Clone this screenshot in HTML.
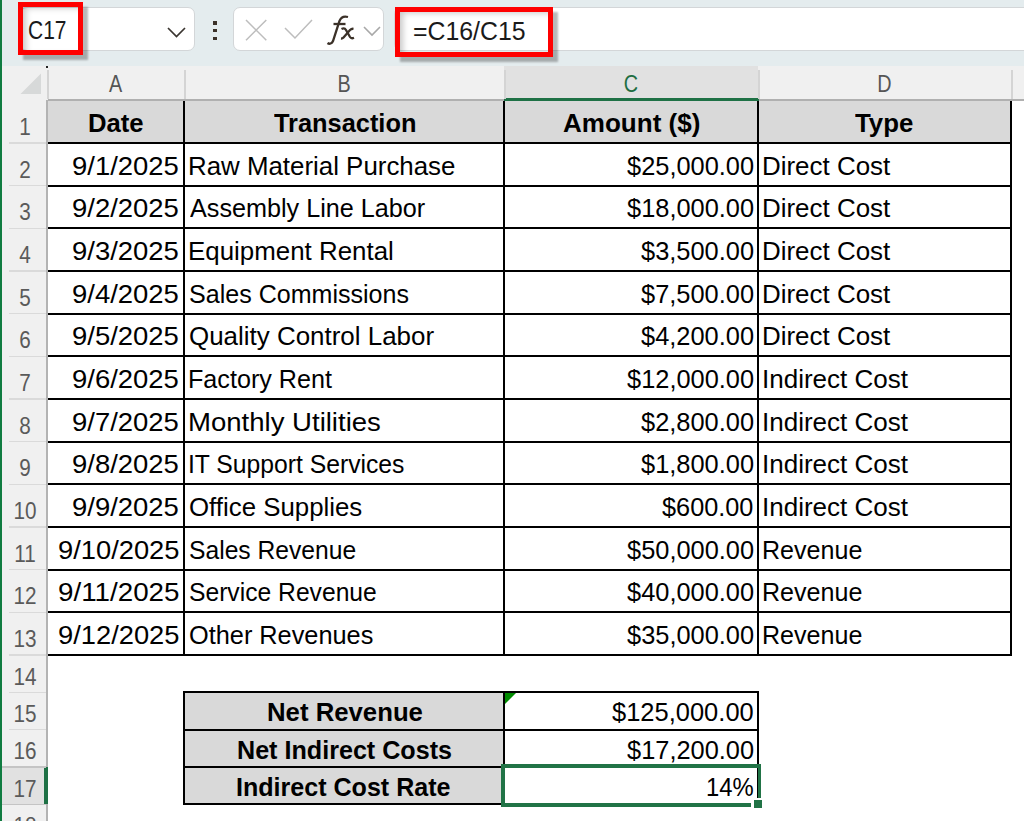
<!DOCTYPE html><html><head><meta charset="utf-8"><style>
html,body{margin:0;padding:0;}
body{width:1024px;height:821px;overflow:hidden;position:relative;background:#fff;font-family:"Liberation Sans", sans-serif;}
.abs{position:absolute;}
.t{position:absolute;white-space:nowrap;font-size:25px;line-height:30px;color:#000;}
.b{font-weight:bold;}
.hl{position:absolute;background:#000;}
.rh{position:absolute;left:2.5px;width:44px;color:#5a5a5a;font-size:23px;text-align:center;transform:scaleX(0.9);}
</style></head><body>

<div class="abs" style="left:0;top:0;width:1024px;height:66px;background:#e4ecee;"></div>
<div class="abs" style="left:20px;top:7px;width:172.5px;height:42px;background:#fff;border:1.5px solid #d3d6d8;border-radius:7px;"></div>
<svg class="abs" style="left:165px;top:25px" width="24" height="16"><polyline points="3,3 11.5,11.5 20,3" fill="none" stroke="#3a3530" stroke-width="1.7"/></svg>
<div class="abs" style="left:213.3px;top:21.0px;width:3.8px;height:3.6px;background:#3b3128;"></div>
<div class="abs" style="left:213.3px;top:28.8px;width:3.8px;height:3.6px;background:#3b3128;"></div>
<div class="abs" style="left:213.3px;top:36.6px;width:3.8px;height:3.6px;background:#3b3128;"></div>
<div class="abs" style="left:233px;top:7px;width:148.5px;height:42px;background:#fff;border:1.5px solid #d3d6d8;border-radius:7px;"></div>
<svg class="abs" style="left:243px;top:17px" width="28" height="28"><path d="M3,3 L23.3,23.3 M23.3,3 L3,23.3" stroke="#bdbdbd" stroke-width="1.5" fill="none"/></svg>
<svg class="abs" style="left:283px;top:17px" width="32" height="24"><polyline points="2,11 12,21 29,3" stroke="#bdbdbd" stroke-width="1.5" fill="none"/></svg>
<svg class="abs" style="left:320px;top:10px" width="40" height="40"><g fill="none" stroke="#3b3128" stroke-width="2.3" stroke-linecap="butt"><path d="M7.5,33 C9.5,34.5 12,33.5 13,31 L19.5,11 C21,7 24,6 28,7"/><path d="M13.5,14 L25.5,14"/><path d="M21.5,19 C23.5,18 25,18.2 26,20 L30,27 C31,28.6 32,28.6 34,27.8"/><path d="M33.5,18.8 C32,18.6 31,19 30,20 L23.5,27.5 C22.8,28.3 22,28.6 21,28.5"/></g></svg>
<svg class="abs" style="left:362px;top:24px" width="22" height="14"><polyline points="2,3 10,11 18,3" stroke="#a8a8a8" stroke-width="1.6" fill="none"/></svg>
<div class="abs" style="left:394px;top:7px;width:640px;height:42px;background:#fff;border:1.5px solid #d3d6d8;border-radius:7px 0 0 7px;"></div>
<div class="abs" style="left:18px;top:2px;width:55px;height:43px;border:5.5px solid #ff0000;box-shadow:5px 5px 2px rgba(0,0,0,0.28), inset 5px 3px 6px -2px rgba(0,0,0,0.22);"></div>
<div class="t" style="left:28.46px;top:14.80px;color:#1a1a1a;transform:scaleX(0.8394);transform-origin:0 0;">C17</div>
<div class="abs" style="left:395px;top:7px;width:147.5px;height:40px;border:5.5px solid #ff0000;box-shadow:5px 5px 2px rgba(0,0,0,0.28), inset 5px 3px 6px -2px rgba(0,0,0,0.22);"></div>
<div class="t" style="left:412.81px;top:16.00px;color:#1a1a1a;transform:scaleX(0.9940);transform-origin:0 0;">=C16/C15</div>
<div class="abs" style="left:0;top:66px;width:1024px;height:34px;background:#f0f0f0;"></div>
<div class="abs" style="left:504px;top:66px;width:254px;height:34px;background:#e1e1e1;"></div>
<div class="abs" style="left:48px;top:99px;width:976px;height:1.5px;background:#b0b0b0;"></div>
<div class="abs" style="left:9px;top:99.5px;width:37px;height:1.5px;background:#dadada;"></div>
<div class="abs" style="left:504px;top:98px;width:255px;height:3px;background:#1e7145;"></div>
<div class="abs" style="left:47px;top:70px;width:1.5px;height:29px;background:#d4d4d4;"></div>
<div class="abs" style="left:184px;top:70px;width:1.5px;height:29px;background:#d4d4d4;"></div>
<div class="abs" style="left:504px;top:70px;width:1.5px;height:29px;background:#d4d4d4;"></div>
<div class="abs" style="left:758px;top:70px;width:1.5px;height:29px;background:#d4d4d4;"></div>
<div class="abs" style="left:1011px;top:70px;width:1.5px;height:29px;background:#d4d4d4;"></div>
<svg class="abs" style="left:8px;top:70px" width="36" height="26"><polygon points="33,3.4 33,24 12.5,24" fill="#d7d9d9"/></svg>
<div class="abs" style="left:46px;top:66px;width:2px;height:2px;background:#222;"></div>
<div class="abs" style="left:47px;top:66.5px;width:137px;height:34px;line-height:34px;text-align:center;font-size:23px;color:#555;transform:scaleX(0.86);">A</div>
<div class="abs" style="left:184px;top:66.5px;width:320px;height:34px;line-height:34px;text-align:center;font-size:23px;color:#555;transform:scaleX(0.86);">B</div>
<div class="abs" style="left:504px;top:66.5px;width:254px;height:34px;line-height:34px;text-align:center;font-size:23px;color:#1e6e42;transform:scaleX(0.86);">C</div>
<div class="abs" style="left:758px;top:66.5px;width:253px;height:34px;line-height:34px;text-align:center;font-size:23px;color:#555;transform:scaleX(0.86);">D</div>
<div class="abs" style="left:2px;top:100px;width:44px;height:721px;background:#f0f0f0;"></div>
<div class="rh" style="top:106.00px;height:42.67px;line-height:42.67px;color:#5a5a5a">1</div>
<div class="abs" style="left:9px;top:142.17px;width:37px;height:1.5px;background:#dadada;"></div>
<div class="rh" style="top:148.67px;height:42.67px;line-height:42.67px;color:#5a5a5a">2</div>
<div class="abs" style="left:9px;top:184.83px;width:37px;height:1.5px;background:#dadada;"></div>
<div class="rh" style="top:191.33px;height:42.67px;line-height:42.67px;color:#5a5a5a">3</div>
<div class="abs" style="left:9px;top:227.50px;width:37px;height:1.5px;background:#dadada;"></div>
<div class="rh" style="top:234.00px;height:42.67px;line-height:42.67px;color:#5a5a5a">4</div>
<div class="abs" style="left:9px;top:270.17px;width:37px;height:1.5px;background:#dadada;"></div>
<div class="rh" style="top:276.67px;height:42.67px;line-height:42.67px;color:#5a5a5a">5</div>
<div class="abs" style="left:9px;top:312.84px;width:37px;height:1.5px;background:#dadada;"></div>
<div class="rh" style="top:319.34px;height:42.67px;line-height:42.67px;color:#5a5a5a">6</div>
<div class="abs" style="left:9px;top:355.50px;width:37px;height:1.5px;background:#dadada;"></div>
<div class="rh" style="top:362.00px;height:42.67px;line-height:42.67px;color:#5a5a5a">7</div>
<div class="abs" style="left:9px;top:398.17px;width:37px;height:1.5px;background:#dadada;"></div>
<div class="rh" style="top:404.67px;height:42.67px;line-height:42.67px;color:#5a5a5a">8</div>
<div class="abs" style="left:9px;top:440.84px;width:37px;height:1.5px;background:#dadada;"></div>
<div class="rh" style="top:447.34px;height:42.67px;line-height:42.67px;color:#5a5a5a">9</div>
<div class="abs" style="left:9px;top:483.50px;width:37px;height:1.5px;background:#dadada;"></div>
<div class="rh" style="top:490.00px;height:42.67px;line-height:42.67px;color:#5a5a5a">10</div>
<div class="abs" style="left:9px;top:526.17px;width:37px;height:1.5px;background:#dadada;"></div>
<div class="rh" style="top:532.67px;height:42.67px;line-height:42.67px;color:#5a5a5a">11</div>
<div class="abs" style="left:9px;top:568.84px;width:37px;height:1.5px;background:#dadada;"></div>
<div class="rh" style="top:575.34px;height:42.67px;line-height:42.67px;color:#5a5a5a">12</div>
<div class="abs" style="left:9px;top:611.50px;width:37px;height:1.5px;background:#dadada;"></div>
<div class="rh" style="top:618.00px;height:42.67px;line-height:42.67px;color:#5a5a5a">13</div>
<div class="abs" style="left:9px;top:654.17px;width:37px;height:1.5px;background:#dadada;"></div>
<div class="rh" style="top:658.67px;height:37.33px;line-height:37.33px;color:#5a5a5a">14</div>
<div class="abs" style="left:9px;top:691.50px;width:37px;height:1.5px;background:#dadada;"></div>
<div class="rh" style="top:696.00px;height:37.33px;line-height:37.33px;color:#5a5a5a">15</div>
<div class="abs" style="left:9px;top:728.84px;width:37px;height:1.5px;background:#dadada;"></div>
<div class="rh" style="top:733.34px;height:37.33px;line-height:37.33px;color:#5a5a5a">16</div>
<div class="abs" style="left:9px;top:766.17px;width:37px;height:1.5px;background:#dadada;"></div>
<div class="abs" style="left:2px;top:766.67px;width:44px;height:37.33px;background:#e1e1e1;"></div>
<div class="rh" style="top:770.67px;height:37.33px;line-height:37.33px;color:#5a5a5a">17</div>
<div class="abs" style="left:9px;top:803.50px;width:37px;height:1.5px;background:#dadada;"></div>
<div class="rh" style="top:808.00px;height:37.33px;line-height:37.33px;color:#5a5a5a">18</div>
<div class="abs" style="left:9px;top:840.83px;width:37px;height:1.5px;background:#dadada;"></div>
<div class="abs" style="left:46px;top:100px;width:2px;height:721px;background:#b3b3b3;"></div>
<div class="abs" style="left:44px;top:766.67px;width:4px;height:37.33px;background:#1e7145;"></div>
<div class="abs" style="left:2px;top:766.17px;width:44px;height:1.5px;background:#c4c4c4;"></div>
<div class="abs" style="left:2px;top:803.50px;width:44px;height:1.5px;background:#c4c4c4;"></div>
<div class="abs" style="left:0;top:0;width:2px;height:821px;background:#107c41;"></div>
<div class="abs" style="left:48px;top:100.5px;width:963px;height:42px;background:#d9d9d9;"></div>
<div class="t b" style="left:87.57px;top:107.83px;transform:scaleX(1.0266);transform-origin:0 0;">Date</div>
<div class="t b" style="left:274.10px;top:107.83px;transform:scaleX(1.0148);transform-origin:0 0;">Transaction</div>
<div class="t b" style="left:562.50px;top:107.83px;transform:scaleX(1.0411);transform-origin:0 0;">Amount ($)</div>
<div class="t b" style="left:855.00px;top:107.83px;transform:scaleX(1.0320);transform-origin:0 0;">Type</div>
<div class="t" style="left:72.40px;top:150.50px;transform:scaleX(1.0984);transform-origin:0 0;">9/1/2025</div>
<div class="t" style="left:187.63px;top:150.50px;transform:scaleX(1.0347);transform-origin:0 0;">Raw Material Purchase</div>
<div class="t" style="left:626.60px;top:150.50px;transform:scaleX(1.0160);transform-origin:0 0;">$25,000.00</div>
<div class="t" style="left:762.13px;top:150.50px;transform:scaleX(1.0371);transform-origin:0 0;">Direct Cost</div>
<div class="t" style="left:72.40px;top:193.17px;transform:scaleX(1.0984);transform-origin:0 0;">9/2/2025</div>
<div class="t" style="left:189.70px;top:193.17px;transform:scaleX(1.0076);transform-origin:0 0;">Assembly Line Labor</div>
<div class="t" style="left:626.60px;top:193.17px;transform:scaleX(1.0160);transform-origin:0 0;">$18,000.00</div>
<div class="t" style="left:762.13px;top:193.17px;transform:scaleX(1.0371);transform-origin:0 0;">Direct Cost</div>
<div class="t" style="left:72.40px;top:235.83px;transform:scaleX(1.0984);transform-origin:0 0;">9/3/2025</div>
<div class="t" style="left:187.63px;top:235.83px;transform:scaleX(1.0355);transform-origin:0 0;">Equipment Rental</div>
<div class="t" style="left:640.70px;top:235.83px;transform:scaleX(1.0162);transform-origin:0 0;">$3,500.00</div>
<div class="t" style="left:762.13px;top:235.83px;transform:scaleX(1.0371);transform-origin:0 0;">Direct Cost</div>
<div class="t" style="left:72.40px;top:278.50px;transform:scaleX(1.0984);transform-origin:0 0;">9/4/2025</div>
<div class="t" style="left:188.70px;top:278.50px;transform:scaleX(1.0023);transform-origin:0 0;">Sales Commissions</div>
<div class="t" style="left:640.70px;top:278.50px;transform:scaleX(1.0162);transform-origin:0 0;">$7,500.00</div>
<div class="t" style="left:762.13px;top:278.50px;transform:scaleX(1.0371);transform-origin:0 0;">Direct Cost</div>
<div class="t" style="left:72.40px;top:321.17px;transform:scaleX(1.0984);transform-origin:0 0;">9/5/2025</div>
<div class="t" style="left:188.66px;top:321.17px;transform:scaleX(1.0374);transform-origin:0 0;">Quality Control Labor</div>
<div class="t" style="left:640.70px;top:321.17px;transform:scaleX(1.0162);transform-origin:0 0;">$4,200.00</div>
<div class="t" style="left:762.13px;top:321.17px;transform:scaleX(1.0371);transform-origin:0 0;">Direct Cost</div>
<div class="t" style="left:72.40px;top:363.84px;transform:scaleX(1.0984);transform-origin:0 0;">9/6/2025</div>
<div class="t" style="left:187.69px;top:363.84px;transform:scaleX(1.0060);transform-origin:0 0;">Factory Rent</div>
<div class="t" style="left:626.60px;top:363.84px;transform:scaleX(1.0160);transform-origin:0 0;">$12,000.00</div>
<div class="t" style="left:762.12px;top:363.84px;transform:scaleX(1.0406);transform-origin:0 0;">Indirect Cost</div>
<div class="t" style="left:72.40px;top:406.50px;transform:scaleX(1.0984);transform-origin:0 0;">9/7/2025</div>
<div class="t" style="left:187.50px;top:406.50px;transform:scaleX(1.1017);transform-origin:0 0;">Monthly Utilities</div>
<div class="t" style="left:640.70px;top:406.50px;transform:scaleX(1.0162);transform-origin:0 0;">$2,800.00</div>
<div class="t" style="left:762.12px;top:406.50px;transform:scaleX(1.0406);transform-origin:0 0;">Indirect Cost</div>
<div class="t" style="left:72.40px;top:449.17px;transform:scaleX(1.0984);transform-origin:0 0;">9/8/2025</div>
<div class="t" style="left:187.72px;top:449.17px;transform:scaleX(0.9879);transform-origin:0 0;">IT Support Services</div>
<div class="t" style="left:640.70px;top:449.17px;transform:scaleX(1.0162);transform-origin:0 0;">$1,800.00</div>
<div class="t" style="left:762.12px;top:449.17px;transform:scaleX(1.0406);transform-origin:0 0;">Indirect Cost</div>
<div class="t" style="left:72.40px;top:491.84px;transform:scaleX(1.0984);transform-origin:0 0;">9/9/2025</div>
<div class="t" style="left:188.67px;top:491.84px;transform:scaleX(1.0332);transform-origin:0 0;">Office Supplies</div>
<div class="t" style="left:662.30px;top:491.84px;transform:scaleX(1.0116);transform-origin:0 0;">$600.00</div>
<div class="t" style="left:762.12px;top:491.84px;transform:scaleX(1.0406);transform-origin:0 0;">Indirect Cost</div>
<div class="t" style="left:57.81px;top:534.50px;transform:scaleX(1.0923);transform-origin:0 0;">9/10/2025</div>
<div class="t" style="left:188.71px;top:534.50px;transform:scaleX(0.9860);transform-origin:0 0;">Sales Revenue</div>
<div class="t" style="left:626.60px;top:534.50px;transform:scaleX(1.0160);transform-origin:0 0;">$50,000.00</div>
<div class="t" style="left:762.19px;top:534.50px;transform:scaleX(1.0034);transform-origin:0 0;">Revenue</div>
<div class="t" style="left:57.79px;top:577.17px;transform:scaleX(1.1111);transform-origin:0 0;">9/11/2025</div>
<div class="t" style="left:188.71px;top:577.17px;transform:scaleX(0.9863);transform-origin:0 0;">Service Revenue</div>
<div class="t" style="left:626.60px;top:577.17px;transform:scaleX(1.0160);transform-origin:0 0;">$40,000.00</div>
<div class="t" style="left:762.19px;top:577.17px;transform:scaleX(1.0034);transform-origin:0 0;">Revenue</div>
<div class="t" style="left:57.81px;top:619.84px;transform:scaleX(1.0923);transform-origin:0 0;">9/12/2025</div>
<div class="t" style="left:188.69px;top:619.84px;transform:scaleX(1.0125);transform-origin:0 0;">Other Revenues</div>
<div class="t" style="left:626.60px;top:619.84px;transform:scaleX(1.0160);transform-origin:0 0;">$35,000.00</div>
<div class="t" style="left:762.19px;top:619.84px;transform:scaleX(1.0034);transform-origin:0 0;">Revenue</div>
<div class="hl" style="left:48px;top:142px;width:964px;height:2px;"></div>
<div class="hl" style="left:48px;top:185px;width:964px;height:2px;"></div>
<div class="hl" style="left:48px;top:227px;width:964px;height:2px;"></div>
<div class="hl" style="left:48px;top:270px;width:964px;height:2px;"></div>
<div class="hl" style="left:48px;top:313px;width:964px;height:2px;"></div>
<div class="hl" style="left:48px;top:355px;width:964px;height:2px;"></div>
<div class="hl" style="left:48px;top:398px;width:964px;height:2px;"></div>
<div class="hl" style="left:48px;top:441px;width:964px;height:2px;"></div>
<div class="hl" style="left:48px;top:483px;width:964px;height:2px;"></div>
<div class="hl" style="left:48px;top:526px;width:964px;height:2px;"></div>
<div class="hl" style="left:48px;top:569px;width:964px;height:2px;"></div>
<div class="hl" style="left:48px;top:611px;width:964px;height:2px;"></div>
<div class="hl" style="left:48px;top:654px;width:964px;height:2px;"></div>
<div class="hl" style="left:183px;top:101px;width:2px;height:554px;"></div>
<div class="hl" style="left:503px;top:101px;width:2px;height:554px;"></div>
<div class="hl" style="left:757px;top:101px;width:2px;height:554px;"></div>
<div class="hl" style="left:1010px;top:101px;width:2px;height:554px;"></div>
<div class="abs" style="left:184px;top:692.00px;width:320px;height:37.33px;background:#d9d9d9;"></div>
<div class="t b" style="left:266.57px;top:697.17px;transform:scaleX(1.0296);transform-origin:0 0;">Net Revenue</div>
<div class="t" style="left:612.00px;top:697.17px;transform:scaleX(1.0194);transform-origin:0 0;">$125,000.00</div>
<div class="abs" style="left:184px;top:729.34px;width:320px;height:37.33px;background:#d9d9d9;"></div>
<div class="t b" style="left:236.59px;top:734.50px;transform:scaleX(1.0051);transform-origin:0 0;">Net Indirect Costs</div>
<div class="t" style="left:626.60px;top:734.50px;transform:scaleX(1.0160);transform-origin:0 0;">$17,200.00</div>
<div class="abs" style="left:184px;top:766.67px;width:320px;height:37.33px;background:#d9d9d9;"></div>
<div class="t b" style="left:236.10px;top:771.84px;transform:scaleX(1.0027);transform-origin:0 0;">Indirect Cost Rate</div>
<div class="t" style="left:706.25px;top:771.84px;transform:scaleX(0.9527);transform-origin:0 0;">14%</div>
<div class="hl" style="left:183px;top:691px;width:576px;height:2px;"></div>
<div class="hl" style="left:183px;top:729px;width:576px;height:2px;"></div>
<div class="hl" style="left:183px;top:766px;width:576px;height:2px;"></div>
<div class="hl" style="left:183px;top:803px;width:576px;height:2px;"></div>
<div class="hl" style="left:183px;top:691px;width:2px;height:114px;"></div>
<div class="hl" style="left:503px;top:691px;width:2px;height:114px;"></div>
<div class="hl" style="left:757px;top:691px;width:2px;height:114px;"></div>
<svg class="abs" style="left:505px;top:693px" width="12" height="12"><polygon points="0,0 11,0 0,11" fill="#008a00"/></svg>
<div class="abs" style="left:501px;top:764px;width:253px;height:35px;border:4px solid #217346;border-right-width:3px;border-bottom-width:4px;box-sizing:content-box;"></div>
<div class="abs" style="left:751px;top:798px;width:12px;height:12px;background:#fff;"></div>
<div class="abs" style="left:754px;top:800px;width:8px;height:8px;background:#217346;"></div>
</body></html>
